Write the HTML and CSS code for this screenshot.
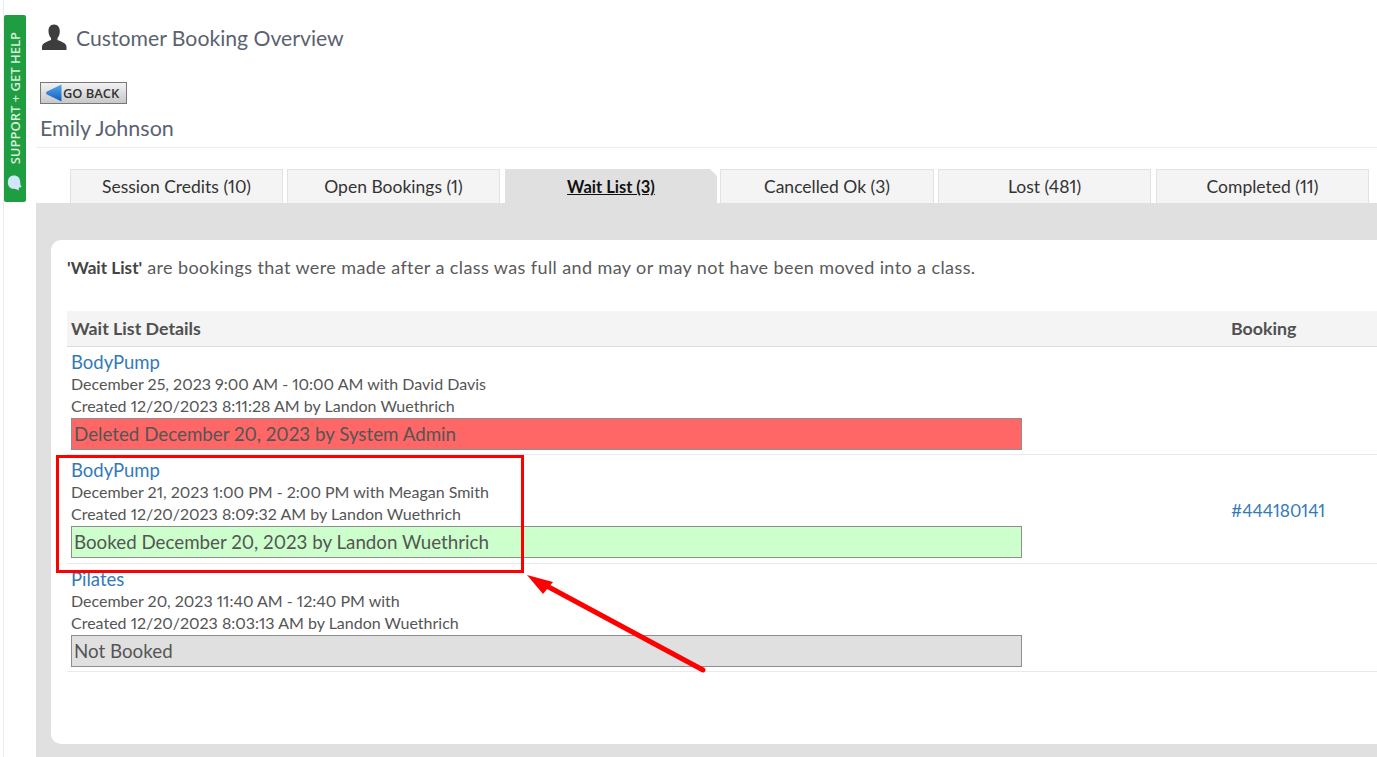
FILE: index.html
```html
<!DOCTYPE html>
<html lang="en">
<head>
<meta charset="utf-8">
<title>Customer Booking Overview</title>
<link rel="stylesheet" href="styles.css">
</head>
<body>
<a class="support" href="#">
  <span class="support-text">SUPPORT + GET HELP</span>
  <svg class="support-icon" width="16" height="16" viewBox="0 0 15 15"><path d="M6.500 0.500C3 0.500 0.800 3 0.800 7C0.800 10.500 3 13 6.500 13C8 13 9.500 13.500 11 14.500C10.800 13.500 11 12.500 11.600 11.800L14 11.200C12.800 10.500 12.400 9 12.400 7C12.400 3 10 0.500 6.500 0.500Z" fill="#cfe6fb"/></svg>
</a>
<main class="page">
  <header class="title-row">
    <svg class="person" width="26" height="27" viewBox="0 0 26 26"><path d="M13 0C9 0 7.500 3 7.500 6.500C7.500 9.500 8.500 12 10 13.500L10 15.500C7 17 1 18 1 22.500L1 25.500L25.500 25.500L25.500 22.500C25.500 18 19.500 17 16.500 15.500L16.500 13.500C18 12 18.800 9.500 18.800 6.500C18.800 3 17 0 13 0Z" fill="#3d3d3d"/></svg>
    <h1>Customer Booking Overview</h1>
  </header>
  <a class="go-back" href="#">
    <svg width="19" height="18" viewBox="0 0 19 18"><defs><linearGradient id="gb" x1="0" y1="0" x2="0" y2="1"><stop offset="0" stop-color="#5aa5ea"/><stop offset="1" stop-color="#0d5fc0"/></linearGradient></defs><path d="M17.500 0.500V17.500L3 10.500Q1 9 3 7.500Z" fill="url(#gb)"/></svg>
    <span>GO BACK</span>
  </a>
  <h2 class="customer">Emily Johnson</h2>
  <nav class="tabs">
    <a class="tab" href="#">Session Credits (10)</a>
    <a class="tab" href="#">Open Bookings (1)</a>
    <a class="tab tab-active" href="#">Wait List (3)</a>
    <a class="tab tab-wide" href="#">Cancelled Ok (3)</a>
    <a class="tab" href="#">Lost (481)</a>
    <a class="tab tab-last" href="#">Completed (11)</a>
  </nav>
  <section class="panel">
    <div class="card">
      <p class="intro"><b>'Wait List'</b> are bookings that were made after a class was full and may or may not have been moved into a class.</p>
      <div class="table-head">
        <div>Wait List Details</div>
        <div>Booking</div>
      </div>
      <article class="row">
        <div class="details">
          <a class="class-name" href="#">BodyPump</a>
          <div class="line">December 25, 2023 9:00 AM - 10:00 AM with David Davis</div>
          <div class="line">Created 12/20/2023 8:11:28 AM by Landon Wuethrich</div>
          <div class="status status-deleted">Deleted December 20, 2023 by System Admin</div>
        </div>
        <div class="booking"></div>
      </article>
      <article class="row">
        <div class="details">
          <a class="class-name" href="#">BodyPump</a>
          <div class="line">December 21, 2023 1:00 PM - 2:00 PM with Meagan Smith</div>
          <div class="line">Created 12/20/2023 8:09:32 AM by Landon Wuethrich</div>
          <div class="status status-booked">Booked December 20, 2023 by Landon Wuethrich</div>
        </div>
        <div class="booking"><a href="#">#444180141</a></div>
      </article>
      <article class="row">
        <div class="details">
          <a class="class-name" href="#">Pilates</a>
          <div class="line">December 20, 2023 11:40 AM - 12:40 PM with</div>
          <div class="line">Created 12/20/2023 8:03:13 AM by Landon Wuethrich</div>
          <div class="status status-none">Not Booked</div>
        </div>
        <div class="booking"></div>
      </article>
    </div>
  </section>
</main>
<div class="callout-box"></div>
<svg class="callout-arrow" width="190" height="110" viewBox="0 0 190 110"><path d="M183 100L25 15" stroke="#f00" stroke-width="5" stroke-linecap="round" fill="none"/><path d="M7 5L33 12L23 24Z" fill="#f00"/></svg>
</body>
</html>
```
FILE: styles.css
```css
* { box-sizing: border-box; }
html, body { margin: 0; height: 757px; overflow: hidden; }
body {
  background: #fff;
  font-family: Lato, "Open Sans", sans-serif;
  font-variant-numeric: proportional-nums;
  color: #555;
  font-size: 15px;
}
a { text-decoration: none; }
.support {
  position: absolute;
  left: 4px;
  top: 15px;
  width: 22px;
  height: 187px;
  background: #1f9e41;
  border-radius: 2px;
  display: flex;
  flex-direction: column;
  align-items: center;
  padding: 17px 1px 0 0;
  color: #d8ebdc;
}
.support-text {
  writing-mode: vertical-rl;
  transform: rotate(180deg);
  font-size: 13px;
  font-family: "Open Sans", sans-serif;
  font-weight: 600;
  line-height: 20px;
  white-space: nowrap;
}
.support-icon { margin: 11px 0 0 1px; flex: none; }
.page {
  margin-left: 3px;
  border-left: 1px solid #ececec;
  height: 757px;
  padding-left: 32px;
  display: flex;
  flex-direction: column;
}
.title-row {
  display: flex;
  align-items: center;
  gap: 9px;
  padding: 24px 0 0 5px;
  height: 50px;
}
.person { flex: none; }
h1 {
  margin: 2px 0 0;
  font-size: 21.200px;
  font-weight: 400;
  color: #5a6270;
  line-height: 26px;
}
.go-back {
  align-self: flex-start;
  margin: 32px 0 0 4px;
  width: 87px;
  height: 22px;
  border: 1px solid #777;
  background: linear-gradient(#f2f2f2, #c8c8c8);
  display: flex;
  align-items: center;
  padding: 0 0 1px 3px;
  color: #333;
  font-family: "Open Sans", sans-serif;
  font-size: 12.900px;
  font-weight: 600;
}
.go-back svg { flex: none; margin-top: 1px; }
.customer {
  margin: 0;
  padding: 12px 0 7px 4px;
  height: 44px;
  border-bottom: 1px solid #ececec;
  font-size: 21.500px;
  font-weight: 400;
  line-height: 25px;
  color: #5a6270;
}
.tabs {
  display: flex;
  gap: 4px;
  margin-top: 21px;
  padding-left: 34px;
  height: 34px;
  flex: none;
}
.tab {
  width: 213px;
  background: #f4f4f4;
  border: 1px solid #e2e2e2;
  border-bottom: 0;
  color: #333;
  font-size: 17.500px;
  text-align: center;
  line-height: 34px;
}
.tab-active {
  width: 212px;
  margin: 0 -1px 0 1px;
  padding-top: 1px;
  background: #e0e0e0;
  border: 0;
  font-weight: 700;
  font-size: 16.500px;
  line-height: 35px;
  color: #111;
  text-decoration: underline;
  clip-path: polygon(0 0, 205px 0, 100% 7px, 100% 100%, 0 100%);
}
.tab-wide { width: 214px; }
.tab-last { margin-left: 1px; }
.panel {
  flex: 1;
  background: #e0e0e0;
  padding: 37px 0 13px 15px;
  min-height: 0;
}
.card {
  height: 100%;
  background: #fff;
  border-radius: 10px 0 0 10px;
  padding: 15px 0 0 16px;
}
.intro {
  margin: 0 0 32px;
  font-size: 18px;
  letter-spacing: 0.400px;
  line-height: 24px;
  color: #5a5a5a;
}
.intro b { color: #444; font-size: 17.200px; letter-spacing: 0; line-height: 0; }
.table-head, .row {
  display: grid;
  grid-template-columns: 1160px 1fr;
}
.table-head {
  height: 36px;
  background: #f4f4f4;
  border-bottom: 1px solid #ddd;
  padding-left: 4px;
  font-size: 17.800px;
  font-weight: 700;
  line-height: 35px;
  color: #505050;
}
.row {
  height: 108.400px;
  border-bottom: 1px solid #eaeaea;
  padding-left: 4px;
  padding-top: 5px;
}
.class-name {
  display: block;
  font-size: 18.500px;
  line-height: 21px;
  color: #337ab7;
}
.line {
  font-size: 16px;
  line-height: 22px;
  color: #555;
}
.status {
  width: 951px;
  height: 32px;
  margin-top: 1px;
  border: 1px solid #8e8e8e;
  padding-left: 2px;
  font-size: 18.750px;
  line-height: 29px;
  color: #555;
}
.status-deleted { background: #ff6666; }
.status-booked { background: #ccffcc; }
.status-none { background: #e0e0e0; }
.booking {
  align-self: center;
  padding-bottom: 3px;
  font-size: 17.300px;
}
.booking a { color: #337ab7; }
.callout-box {
  position: absolute;
  left: 56px;
  top: 455px;
  width: 468px;
  height: 118px;
  border: 3px solid #f00;
  pointer-events: none;
}
.callout-arrow {
  position: absolute;
  left: 520px;
  top: 570px;
  pointer-events: none;
}
```
